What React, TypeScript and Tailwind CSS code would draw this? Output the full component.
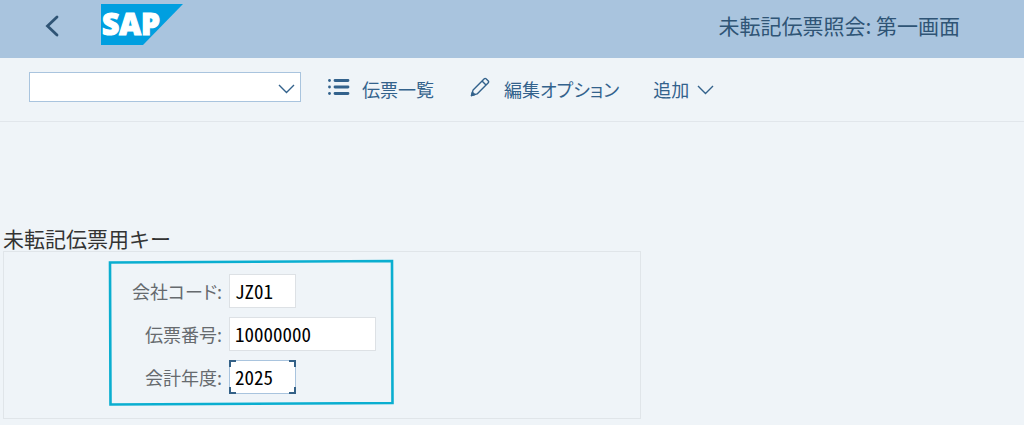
import React, { useState } from "react";

type FieldProps = {
  id: string;
  label: string;
  value: string;
  onChange: (value: string) => void;
  width: string;
  focused?: boolean;
};

const corners = [
  "left-0 top-0 border-l-2 border-t-2",
  "right-0 top-0 border-r-2 border-t-2",
  "left-0 bottom-0 border-b-2 border-l-2",
  "right-0 bottom-0 border-b-2 border-r-2",
];

const SapLogo = () => (
  <svg width="82" height="41" viewBox="0 0 82 41" className="overflow-visible" role="img" aria-label="SAP">
    <path d="M0 0h82L42 41H0z" fill="#009fe0" />
    <text
      x="1"
      y="31"
      fill="#fff"
      stroke="#fff"
      strokeWidth="1.2"
      fontFamily="'Open Sans', sans-serif"
      fontWeight="800"
      fontSize="30"
    >
      SAP
    </text>
  </svg>
);

const ChevronDown = () => (
  <svg width="17" height="10" viewBox="0 0 17 10" fill="none" stroke="currentColor" strokeWidth="1.4" aria-hidden="true">
    <path d="M1 1l7.5 7.5L16 1" />
  </svg>
);

const ListIcon = () => (
  <svg width="22" height="18" viewBox="0 0 22 18" fill="currentColor" aria-hidden="true">
    <circle cx="1.5" cy="2.5" r="1.4" />
    <circle cx="1.5" cy="9" r="1.4" />
    <circle cx="1.5" cy="15.5" r="1.4" />
    <path d="M7 2.5h13M7 9h13M7 15.5h13" stroke="currentColor" strokeWidth="2.8" strokeLinecap="round" />
  </svg>
);

const PencilIcon = () => (
  <svg width="20" height="20" viewBox="0 0 20 20" fill="none" stroke="currentColor" strokeWidth="1.4" strokeLinejoin="round" aria-hidden="true">
    <path d="M1.5 18.5l1.6-5.6L14.300 1.700a1.200 1.200 0 0 1 1.700 0l2.300 2.300a1.200 1.200 0 0 1 0 1.700L7.100 16.900z" />
    <path d="M12 4l4 4" />
    <path d="M1.500 18.500l.9-3.200 2.300 2.300z" fill="currentColor" />
  </svg>
);

const Field = ({ id, label, value, onChange, width, focused }: FieldProps) => (
  <div className="flex items-center">
    <label
      htmlFor={id}
      className="w-[219px] pr-[7px] text-right text-[18px] text-[#666a6e] [font-feature-settings:'palt']"
    >
      {label}
    </label>
    <div className={`relative ${width}`}>
      <input
        id={id}
        type="text"
        value={value}
        onChange={(e) => onChange(e.target.value)}
        className={`block h-[34px] w-full border bg-white px-[5px] pb-[2px] text-[19px] text-black outline-none [font-feature-settings:'hwid'] ${
          focused ? "border-[#a9c4de]" : "border-[#dde1e5]"
        }`}
      />
      {focused &&
        corners.map((corner) => (
          <span key={corner} className={`pointer-events-none absolute size-[7px] border-[#346187] ${corner}`} />
        ))}
    </div>
  </div>
);

const App = () => {
  const [companyCode, setCompanyCode] = useState("JZ01");
  const [documentNumber, setDocumentNumber] = useState("10000000");
  const [fiscalYear, setFiscalYear] = useState("2025");

  return (
    <div className="min-h-screen bg-[#eff4f8] font-['Noto_Sans_CJK_JP',sans-serif]">
      <header className="flex h-[58px] items-center bg-[#a9c4de] pr-16 pb-[6px] pl-[44px] text-[#2f5475]">
        <button type="button" aria-label="戻る" className="flex w-[57px] items-center">
          <svg width="16" height="22" viewBox="0 0 16 22" fill="none" stroke="currentColor" strokeWidth="2.8" aria-hidden="true">
            <path d="M13 2 3.500 11l9.500 9" strokeLinecap="round" />
          </svg>
        </button>
        <div className="pb-[3px]">
          <SapLogo />
        </div>
        <h1 className="ml-auto text-[21px]">未転記伝票照会: 第一画面</h1>
      </header>

      <div className="flex h-16 items-center border-b border-[#e1e6eb] pl-[29px] text-[18px] text-[#33628c]">
        <div className="relative mr-[27px] w-[272px] pb-[5px]">
          <select
            aria-label="コマンド"
            className="block h-[30px] w-full appearance-none border border-[#a9c4de] bg-white px-2 outline-none"
          >
            <option value=""></option>
          </select>
          <span className="pointer-events-none absolute top-[12px] right-[6px] leading-none">
            <ChevronDown />
          </span>
        </div>
        <button type="button" className="mr-9 flex items-center gap-3">
          <span className="pb-[6px]">
            <ListIcon />
          </span>
          伝票一覧
        </button>
        <button type="button" className="mr-[34px] flex items-center gap-[14px] [font-feature-settings:'palt']">
          <span className="pb-[6px]">
            <PencilIcon />
          </span>
          編集オプション
        </button>
        <button type="button" className="flex items-center gap-2">
          追加
          <ChevronDown />
        </button>
      </div>

      <main className="px-[3px] pt-[103px]">
        <h2 className="text-[21px] leading-[26px] text-[#333]">未転記伝票用キー</h2>
        <div className="relative w-full max-w-[638px] border border-[#e0e5e9] pt-[22px] pb-6 pl-[6px]">
          <div className="flex flex-col gap-[9px]">
            <Field id="company-code" label="会社コード:" value={companyCode} onChange={setCompanyCode} width="w-[67px]" />
            <Field
              id="document-number"
              label="伝票番号:"
              value={documentNumber}
              onChange={setDocumentNumber}
              width="w-[147px]"
            />
            <Field id="fiscal-year" label="会計年度:" value={fiscalYear} onChange={setFiscalYear} width="w-[67px]" focused />
          </div>
          {/* hand-drawn marker around the key fields */}
          <svg
            className="pointer-events-none absolute top-[7px] left-[104px]"
            width="288"
            height="148"
            viewBox="0 0 288 148"
            fill="none"
            stroke="#0aaed0"
            strokeWidth="2.6"
            aria-hidden="true"
          >
            <path d="M2 3.500 284 2l.5 142L2.500 145.500z" />
          </svg>
        </div>
      </main>
    </div>
  );
};

export default App;
